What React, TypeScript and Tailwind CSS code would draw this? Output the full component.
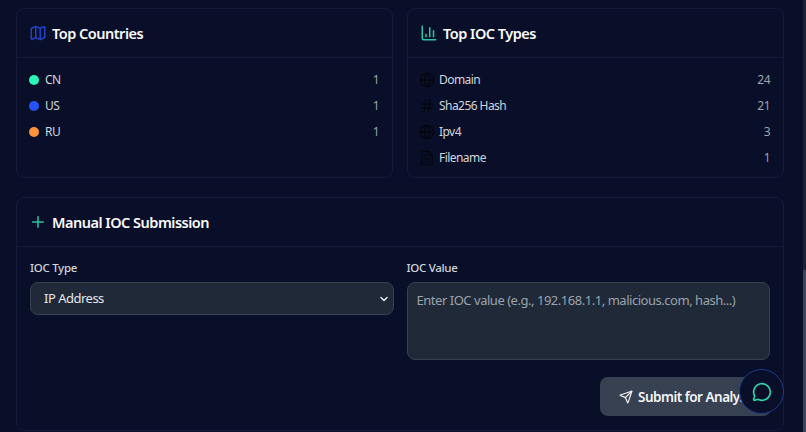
import { Map, ChartColumn, Globe, Hash, FileText, Plus, Send, MessageCircle, ChevronDown } from "lucide-react";

const countries = [
  { code: "CN", count: 1, color: "bg-[#2cf5b8]" },
  { code: "US", count: 1, color: "bg-[#2452fb]" },
  { code: "RU", count: 1, color: "bg-[#fb923c]" },
];

const iocTypes = [
  { name: "Domain", count: 24, icon: Globe },
  { name: "Sha256 Hash", count: 21, icon: Hash },
  { name: "Ipv4", count: 3, icon: Globe },
  { name: "Filename", count: 1, icon: FileText },
];

function CardHeader({ icon, title }: { icon: React.ReactNode; title: string }) {
  return (
    <div className="flex h-[49px] items-center gap-[5px] border-b border-[#151b38] px-[12px]">
      {icon}
      <h3 className="text-[14.5px] font-semibold leading-none tracking-[-0.5px] text-[#f9fafb]">{title}</h3>
    </div>
  );
}

export default function App() {
  return (
    <div className="flex h-[432px] overflow-hidden bg-[#0a0f29] font-['Noto_Sans',sans-serif]">
      <div className="relative flex-1 pl-4 pr-[19px] pt-[8px]">
        <div className="grid grid-cols-2 gap-[14px]">
          <section className="h-[170px] rounded-lg border border-[#151b38]">
            <CardHeader icon={<Map className="h-[18px] w-[18px] text-[#2342c4]" />} title="Top Countries" />
            <ul className="flex flex-col gap-[6px] pl-[12px] pr-[13px] pt-[12px]">
              {countries.map((c) => (
                <li key={c.code} className="flex h-5 items-center justify-between text-[12px] tracking-[-0.5px] text-[#d1d5db]">
                  <span className="flex items-center gap-[6px]">
                    <span className={`h-[10px] w-[10px] rounded-full ${c.color}`} />
                    {c.code}
                  </span>
                  <span className="text-[#9ca3af]">{c.count}</span>
                </li>
              ))}
            </ul>
          </section>
          <section className="h-[170px] rounded-lg border border-[#151b38]">
            <CardHeader icon={<ChartColumn className="h-[18px] w-[18px] text-[#2cc7a0]" />} title="Top IOC Types" />
            <ul className="flex flex-col gap-[6px] pl-[11px] pr-[13px] pt-[12px]">
              {iocTypes.map((t) => (
                <li key={t.name} className="flex h-5 items-center justify-between text-[12px] tracking-[-0.55px] text-[#d1d5db]">
                  <span className="flex items-center gap-[4px]">
                    <t.icon className="h-4 w-4 text-[#05070f]" />
                    {t.name}
                  </span>
                  <span className="text-[#9ca3af]">{t.count}</span>
                </li>
              ))}
            </ul>
          </section>
        </div>

        <section className="mt-[19px] h-[234px] rounded-lg border border-[#151b38]">
          <CardHeader icon={<Plus className="h-[18px] w-[18px] text-[#2cc7a0]" />} title="Manual IOC Submission" />
          <div className="grid grid-cols-2 gap-[13px] px-[13px] pt-[13px]">
            <div>
              <label className="mb-[6px] block text-[11.5px] font-medium leading-[16px] tracking-[-0.3px] text-[#d1d5db]">IOC Type</label>
              <div className="flex h-[33px] items-center justify-between rounded-lg border border-[#374151] bg-[#1f2937] pl-[13px] pr-[3px] text-[13px] tracking-[-0.5px] text-[#e5e7eb]">
                <span className="pt-[1px]">IP Address</span>
                <ChevronDown className="h-[12px] w-[12px] stroke-[3]" />
              </div>
            </div>
            <div>
              <label className="mb-[6px] block text-[11.5px] font-medium leading-[16px] tracking-[-0.3px] text-[#d1d5db]">IOC Value</label>
              <div className="h-[78px] rounded-lg border border-[#374151] bg-[#1f2937] px-[9px] py-[8px] text-[13px] leading-[18px] tracking-[-0.47px] text-[#9ca3af]">
                Enter IOC value (e.g., 192.168.1.1, malicious.com, hash...)
              </div>
            </div>
          </div>
          <div className="flex justify-end px-[12px] pt-[17px]">
            <button className="flex h-[39px] w-[171px] items-center gap-[5px] overflow-hidden whitespace-nowrap rounded-lg bg-[#374151] pl-[19px] text-[13.5px] font-semibold tracking-[-0.5px] text-[#f3f4f6]">
              <Send className="h-[14px] w-[14px] shrink-0" />
              <span className="pt-[1px]">Submit for Analysis</span>
            </button>
          </div>
        </section>

        <button className="absolute left-[739px] top-[369px] flex h-[45px] w-[45px] items-center justify-center rounded-full border border-[#1e3a8a] bg-[#0a0f29]">
          <MessageCircle className="h-5 w-5 text-[#2fd4a8]" />
        </button>
      </div>
      <div className="flex w-[3px] flex-col bg-[#1c2233]">
        <div className="mt-[270px] flex-1 bg-[#3b4557]" />
      </div>
    </div>
  );
}
